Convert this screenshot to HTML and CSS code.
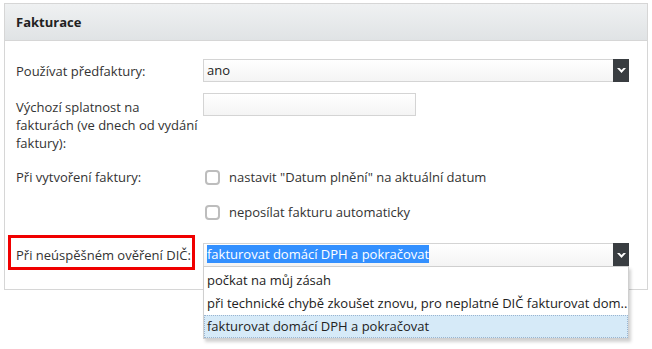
FILE: index.html
```html
<!DOCTYPE html>
<html lang="cs">
  <head>
    <meta charset="UTF-8" />
    <title>Fakturace</title>
    <link rel="stylesheet" href="styles.css">
  </head>
  <body>
    <div class="panel">
      <div class="panel-head">Fakturace</div>
      <div class="panel-body">
        <div class="row">
          <div class="row-label">Používat předfaktury:</div>
          <div class="row-field">
            <div class="select">
              <span class="select-value">ano</span>
              <span class="select-btn">
                <svg width="9" height="5" viewBox="0 0 9 5"><polygon points="0,0 2.5,0 4.5,2 6.5,0 9,0 4.5,5" fill="#fff" /></svg>
              </span>
            </div>
          </div>
        </div>

        <div class="row row-days">
          <div class="row-label">Výchozí splatnost na fakturách (ve dnech od vydání faktury):</div>
          <div class="row-field">
            <div class="text-input"></div>
          </div>
        </div>

        <div class="row row-create">
          <div class="row-label">Při vytvoření faktury:</div>
          <div class="row-field checks">
            <label class="check"><span class="check-box"></span>nastavit "Datum plnění" na aktuální datum</label>
            <label class="check"><span class="check-box"></span>neposílat fakturu automaticky</label>
          </div>
        </div>

        <div class="row row-dic">
          <div class="row-label marked">Při neúspěšném ověření DIČ:</div>
          <div class="row-field">
            <div class="select">
              <span class="select-value"><span class="picked">fakturovat domácí DPH a pokračovat</span></span>
              <span class="select-btn">
                <svg width="9" height="5" viewBox="0 0 9 5"><polygon points="0,0 2.5,0 4.5,2 6.5,0 9,0 4.5,5" fill="#fff" /></svg>
              </span>
              <ul class="options">
                <li>počkat na můj zásah</li>
                <li>při technické chybě zkoušet znovu, pro neplatné DIČ fakturovat dom..</li>
                <li class="active">fakturovat domácí DPH a pokračovat</li>
              </ul>
            </div>
          </div>
        </div>
      </div>
    </div>
  </body>
</html>
```

FILE: styles.css
```css
html,
body {
  min-height: 349px;
}

body {
  margin: 0;
  padding: 0;
  background: #fff;
  font-family: "Open Sans", "Liberation Sans", sans-serif;
  font-size: 13px;
  color: #333;
}

.panel {
  margin: 3px 4px 0;
  border: 1px solid #d6d6d6;
  background: #fff;
}

.panel-head {
  height: 36px;
  line-height: 36px;
  padding-left: 11px;
  font-weight: 700;
  color: #222;
  background: linear-gradient(#eff1f2, #e0e3e5);
  border-bottom: 1px solid #d6d6d6;
}

.panel-body {
  padding: 18px 18px 19px 11px;
}

.row {
  display: flex;
}

.row-label {
  width: 187px;
  flex-shrink: 0;
  padding-top: 3px;
  line-height: 18px;
  box-sizing: border-box;
}

.row-field {
  flex: 1;
}

.row-days {
  margin-top: 11px;
}

.row-days .row-label {
  padding: 5px 4px 0 0;
}

.row-create {
  margin-top: 16px;
}

.row-create .row-label {
  padding-top: 0;
}

.row-dic {
  margin-top: 22px;
}

.select {
  position: relative;
  display: flex;
  height: 23px;
  border: 1px solid #d4d4d4;
  box-sizing: border-box;
  background: linear-gradient(#fff, #f4f4f4);
}

.select-value {
  flex: 1;
  padding-left: 3px;
  line-height: 21px;
  color: #222;
}

.picked {
  display: inline-block;
  line-height: 18px;
  background: #3390ff;
  color: #fff;
}

.select-btn {
  width: 16px;
  margin: -1px -1px -1px 0;
  background: #393d41;
  display: flex;
  align-items: center;
  justify-content: center;
}

.row-dic .select {
  height: 24px;
}

.text-input {
  width: 213px;
  height: 23px;
  border: 1px solid #d4d4d4;
  box-sizing: border-box;
  background: linear-gradient(#fff, #f4f4f4);
}

.checks {
  display: flex;
  flex-direction: column;
  gap: 17px;
}

.check {
  display: flex;
  align-items: center;
  line-height: 18px;
}

.check-box {
  width: 11px;
  height: 11px;
  margin: 0 9px 0 2px;
  border: 2px solid #bdbdbd;
  border-radius: 4px;
  background: #fff;
}

.marked {
  margin: -8px 8px 0 -8px;
  width: 187px;
  height: 35px;
  padding: 8px 0 0 5px;
  border: 3px solid #f00000;
  white-space: nowrap;
}

.options {
  position: absolute;
  top: 100%;
  left: -1px;
  right: -1px;
  margin: 0;
  padding: 2px 0 0;
  list-style: none;
  background: #fff;
  border: 1px solid #cfcfcf;
  box-shadow: 2px 3px 3px rgba(0, 0, 0, 0.18);
  z-index: 2;
}

.options li {
  height: 23px;
  line-height: 23px;
  padding-left: 3px;
  color: #222;
  white-space: nowrap;
  overflow: hidden;
  box-sizing: border-box;
}

.options li.active {
  background: #d6eaf8;
  outline: 1px dotted #9ab4d0;
  outline-offset: -1px;
}
```
